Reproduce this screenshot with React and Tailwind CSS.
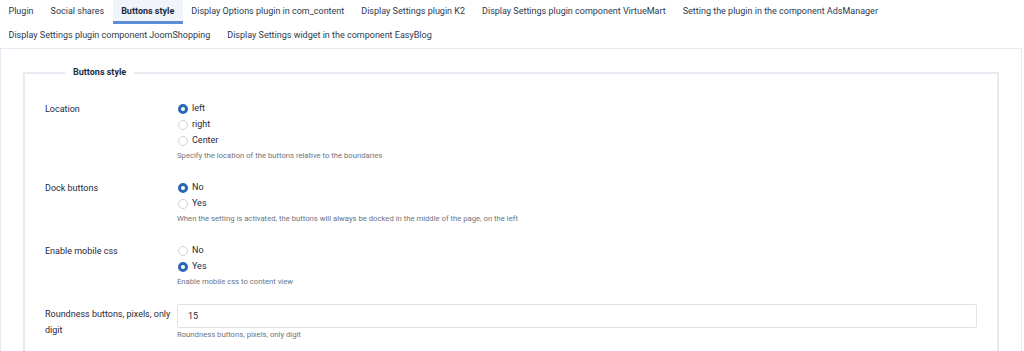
import { useState } from 'react'

const tabs = [
  ['Plugin', 'Social shares', 'Buttons style', 'Display Options plugin in com_content', 'Display Settings plugin K2', 'Display Settings plugin component VirtueMart', 'Setting the plugin in the component AdsManager'],
  ['Display Settings plugin component JoomShopping', 'Display Settings widget in the component EasyBlog'],
]

function Radio({ checked, label, onClick }) {
  return (
    <label className="flex items-center h-4 cursor-pointer" onClick={onClick}>
      <span
        className={
          checked
            ? 'ml-[1px] w-[10px] h-[10px] rounded-full border-[3px] border-[#2a69b8] bg-white'
            : 'ml-[1px] w-[10px] h-[10px] rounded-full border border-[#cfd4db] bg-white'
        }
      />
      <span className="ml-[4px] text-[9px] text-[#1f2a3a]">{label}</span>
    </label>
  )
}

function Row({ label, help, children }) {
  return (
    <div className="flex">
      <div className="w-[132px] shrink-0 pr-[2px] text-[9px] leading-4 text-[#1f2a3a]">{label}</div>
      <div className="flex-1">
        {children}
        <p className="text-[7.7px] leading-3 text-[#6c7480] mt-[1px]">{help}</p>
      </div>
    </div>
  )
}

function RadioGroup({ options, initial }) {
  const [value, setValue] = useState(initial)
  return (
    <div className="flex flex-col">
      {options.map((o) => (
        <Radio key={o} label={o} checked={value === o} onClick={() => setValue(o)} />
      ))}
    </div>
  )
}

export default function App() {
  const active = 'Buttons style'
  return (
    <div className="w-[1024px] h-[351px] bg-white overflow-hidden font-['Roboto',sans-serif]">
      <nav className="flex flex-col">
        {tabs.map((row, i) => (
          <div key={i} className="flex h-6">
            {row.map((t) => (
              <button
                key={t}
                className={
                  t === active
                    ? 'px-[8.5px] h-6 text-[9px] font-bold text-[#1c2a3f] bg-[#f1f4f9] border-b-[3px] border-[#5b8ed4] pt-[3px]'
                    : 'px-[8.5px] h-6 text-[9px] text-[#2b3a50]'
                }
              >
                {t}
              </button>
            ))}
          </div>
        ))}
      </nav>
      <div className="border-t border-x border-[#e6eaf1] mr-[2px] px-[22px] pt-[17px]">
        <fieldset className="border-2 border-[#e6eaf1] rounded-[1px] px-[20px] pb-4 pt-[21px]">
          <legend className="ml-[20px] px-[8px] text-[9px] font-bold text-[#1c2a3f]">Buttons style</legend>
          <div className="flex flex-col gap-[18px]">
            <Row label="Location" help="Specify the location of the buttons relative to the boundaries">
              <RadioGroup options={['left', 'right', 'Center']} initial="left" />
            </Row>
            <Row label="Dock buttons" help="When the setting is activated, the buttons will always be docked in the middle of the page, on the left">
              <RadioGroup options={['No', 'Yes']} initial="No" />
            </Row>
            <Row label="Enable mobile css" help="Enable mobile css to content view">
              <RadioGroup options={['No', 'Yes']} initial="Yes" />
            </Row>
            <Row label="Roundness buttons, pixels, only digit" help="Roundness buttons, pixels, only digit">
              <input
                defaultValue="15"
                className="block w-full h-6 mt-[-2px] mb-[1px] border border-[#dfe3ea] rounded-[2px] px-[10px] text-[9px] text-[#1f2a3a] outline-none"
              />
            </Row>
          </div>
        </fieldset>
      </div>
    </div>
  )
}
